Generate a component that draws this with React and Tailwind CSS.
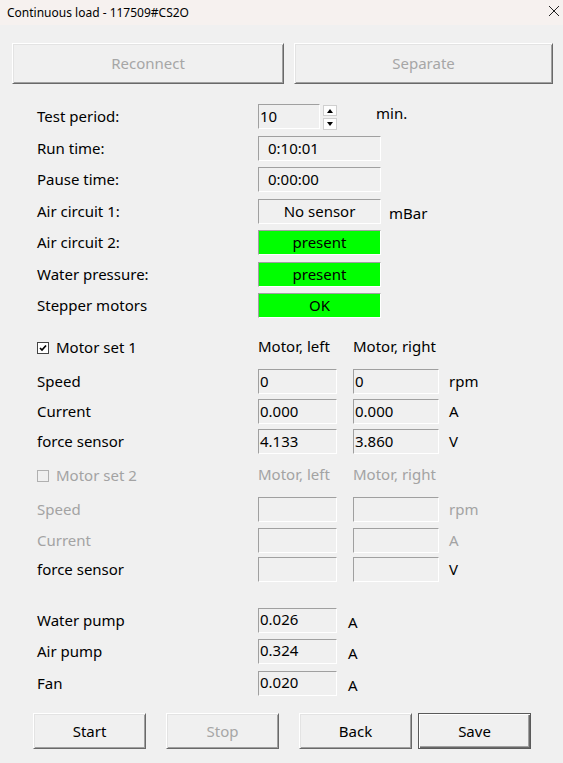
const font = { fontFamily: '"Noto Sans", "Open Sans", sans-serif' };

function Btn3D({ children, className = "", disabled, isDefault }) {
  const edge = isDefault
    ? "border border-[#5a5a5a] shadow-[inset_1px_1px_0_#ffffff,inset_-1px_-1px_0_#696969,inset_-2px_-2px_0_#a0a0a0]"
    : "border-t border-l border-t-white border-l-white border-b border-r border-b-[#696969] border-r-[#696969] shadow-[inset_1px_1px_0_#e3e3e3,inset_-1px_-1px_0_#a0a0a0]";
  return (
    <div
      className={`flex items-center justify-center bg-[#f0f0f0] text-[15px] ${edge} ${
        disabled ? "text-[#a6a6a6]" : "text-black"
      } ${className}`}
    >
      {children}
    </div>
  );
}

function Box({ children, className = "", align = "left", green }) {
  return (
    <div
      className={`h-[25px] flex items-center border-t border-l border-t-[#a0a0a0] border-l-[#a0a0a0] border-b border-r border-b-white border-r-white text-[15px] text-black leading-none ${
        green ? "bg-[#00ff00]" : "bg-[#f0f0f0]"
      } ${align === "center" ? "justify-center" : ""} ${className}`}
    >
      {children}
    </div>
  );
}

function Row({ label, children, className = "", muted }) {
  return (
    <div className={`flex items-center h-[25px] ${className}`}>
      <div
        className={`w-[221px] shrink-0 text-[15px] ${
          muted ? "text-[#a3a3a3]" : "text-black"
        }`}
      >
        {label}
      </div>
      {children}
    </div>
  );
}

function Check({ checked, disabled }) {
  return (
    <div
      className={`w-[12px] h-[12px] border flex items-center justify-center ${
        disabled ? "border-[#b0b0b0] bg-[#f0f0f0]" : "border-[#444] bg-white"
      }`}
    >
      {checked && (
        <svg width="10" height="10" viewBox="0 0 10 10">
          <path d="M2 5 L4 7 L8 2.5" stroke="#000" strokeWidth="1.7" fill="none" />
        </svg>
      )}
    </div>
  );
}

function MotorRow({ label, a, b, unit, muted, labelMuted, className = "" }) {
  return (
    <Row label={label} muted={labelMuted} className={className}>
      <Box className="w-[79px] pl-[1px]">{a}</Box>
      <Box className="w-[86px] ml-[16px] pl-[1px]">{b}</Box>
      <div
        className={`ml-[10px] text-[15px] ${muted ? "text-[#a3a3a3]" : "text-black"}`}
      >
        {unit}
      </div>
    </Row>
  );
}

function MotorHeader({ title, checked, disabled, className = "" }) {
  const c = disabled ? "text-[#a3a3a3]" : "text-black";
  return (
    <div className={`flex items-center h-[25px] ${className}`}>
      <div className="w-[221px] shrink-0 flex items-center gap-[7px]">
        <Check checked={checked} disabled={disabled} />
        <span className={`text-[15px] ${c}`}>{title}</span>
      </div>
      <div className={`w-[95px] text-[15px] -mt-[3px] ${c}`}>Motor, left</div>
      <div className={`text-[15px] -mt-[3px] ${c}`}>Motor, right</div>
    </div>
  );
}

function Spinner() {
  return (
    <div className="flex flex-col gap-[2px] ml-[3px] pt-[2px]">
      <div className="w-[14px] h-[11px] bg-[#fdfdfd] border border-[#cfcfcf] flex items-center justify-center">
        <div className="w-0 h-0 border-l-[3px] border-r-[3px] border-b-[4px] border-l-transparent border-r-transparent border-b-black" />
      </div>
      <div className="w-[14px] h-[12px] bg-[#fdfdfd] border border-[#cfcfcf] flex items-center justify-center">
        <div className="w-0 h-0 border-l-[3px] border-r-[3px] border-t-[4px] border-l-transparent border-r-transparent border-t-black" />
      </div>
    </div>
  );
}

function MotorPump({ label, value, className = "" }) {
  return (
    <Row label={label} className={className}>
      <Box className="w-[79px] pl-[1px] !items-start pt-[3px]">{value}</Box>
      <span className="ml-[11px] mt-[4px] text-[15px]">A</span>
    </Row>
  );
}

export default function App() {
  return (
    <div className="w-[563px] h-[763px] bg-[#f0f0f0] overflow-hidden" style={font}>
      {/* Title bar */}
      <div className="h-[25px] bg-[#f6f1ef] flex items-center justify-between pl-[7px] pr-[2px]">
        <span className="text-[12px] text-black">Continuous load - 117509#CS2O</span>
        <svg width="12" height="12" viewBox="0 0 12 12" className="mr-[1px] -mt-[4px]">
          <path d="M1 1 L11 11 M11 1 L1 11" stroke="#222" strokeWidth="1" />
        </svg>
      </div>

      {/* Top buttons */}
      <div className="flex pl-[12px] pt-[18px] gap-[10px]">
        <Btn3D disabled className="w-[272px] h-[41px]">Reconnect</Btn3D>
        <Btn3D disabled className="w-[259px] h-[41px]">Separate</Btn3D>
      </div>

      <div className="pl-[37px] mt-[20px] flex flex-col">
        {/* Status block */}
        <div className="flex flex-col gap-[6.5px]">
          <Row label="Test period:">
            <Box className="w-[62px] pl-[1px]">10</Box>
            <Spinner />
            <span className="ml-[39px] -mt-[7px] text-[15px]">min.</span>
          </Row>
          <Row label="Run time:">
            <Box className="w-[123px] pl-[9px]">0:10:01</Box>
          </Row>
          <Row label="Pause time:">
            <Box className="w-[123px] pl-[9px]">0:00:00</Box>
          </Row>
          <Row label="Air circuit 1:">
            <Box className="w-[123px]" align="center">No sensor</Box>
            <span className="ml-[8px] mt-[4px] text-[15px]">mBar</span>
          </Row>
          <Row label="Air circuit 2:">
            <Box className="w-[123px]" align="center" green>present</Box>
          </Row>
          <Row label="Water pressure:">
            <Box className="w-[123px]" align="center" green>present</Box>
          </Row>
          <Row label="Stepper motors">
            <Box className="w-[123px]" align="center" green>OK</Box>
          </Row>
        </div>

        {/* Motor set 1 */}
        <MotorHeader title="Motor set 1" checked className="mt-[17px]" />
        <MotorRow label="Speed" a="0" b="0" unit="rpm" className="mt-[9px]" />
        <MotorRow label="Current" a="0.000" b="0.000" unit="A" className="mt-[5px]" />
        <MotorRow label="force sensor" a="4.133" b="3.860" unit="V" className="mt-[5px]" />

        {/* Motor set 2 */}
        <MotorHeader title="Motor set 2" disabled className="mt-[9px]" />
        <MotorRow label="Speed" unit="rpm" muted labelMuted className="mt-[9px]" />
        <MotorRow label="Current" unit="A" muted labelMuted className="mt-[6px]" />
        <MotorRow label="force sensor" unit="V" className="mt-[4px]" />

        {/* Pumps */}
        <MotorPump label="Water pump" value="0.026" className="mt-[26px]" />
        <MotorPump label="Air pump" value="0.324" className="mt-[6px]" />
        <MotorPump label="Fan" value="0.020" className="mt-[7px]" />
      </div>

      {/* Bottom buttons */}
      <div className="flex pl-[33px] mt-[17px]">
        <Btn3D className="w-[113px] h-[36px]">Start</Btn3D>
        <Btn3D disabled className="w-[113px] h-[36px] ml-[20px]">Stop</Btn3D>
        <Btn3D className="w-[113px] h-[36px] ml-[20px]">Back</Btn3D>
        <Btn3D isDefault className="w-[113px] h-[36px] ml-[6px]">Save</Btn3D>
      </div>
    </div>
  );
}
